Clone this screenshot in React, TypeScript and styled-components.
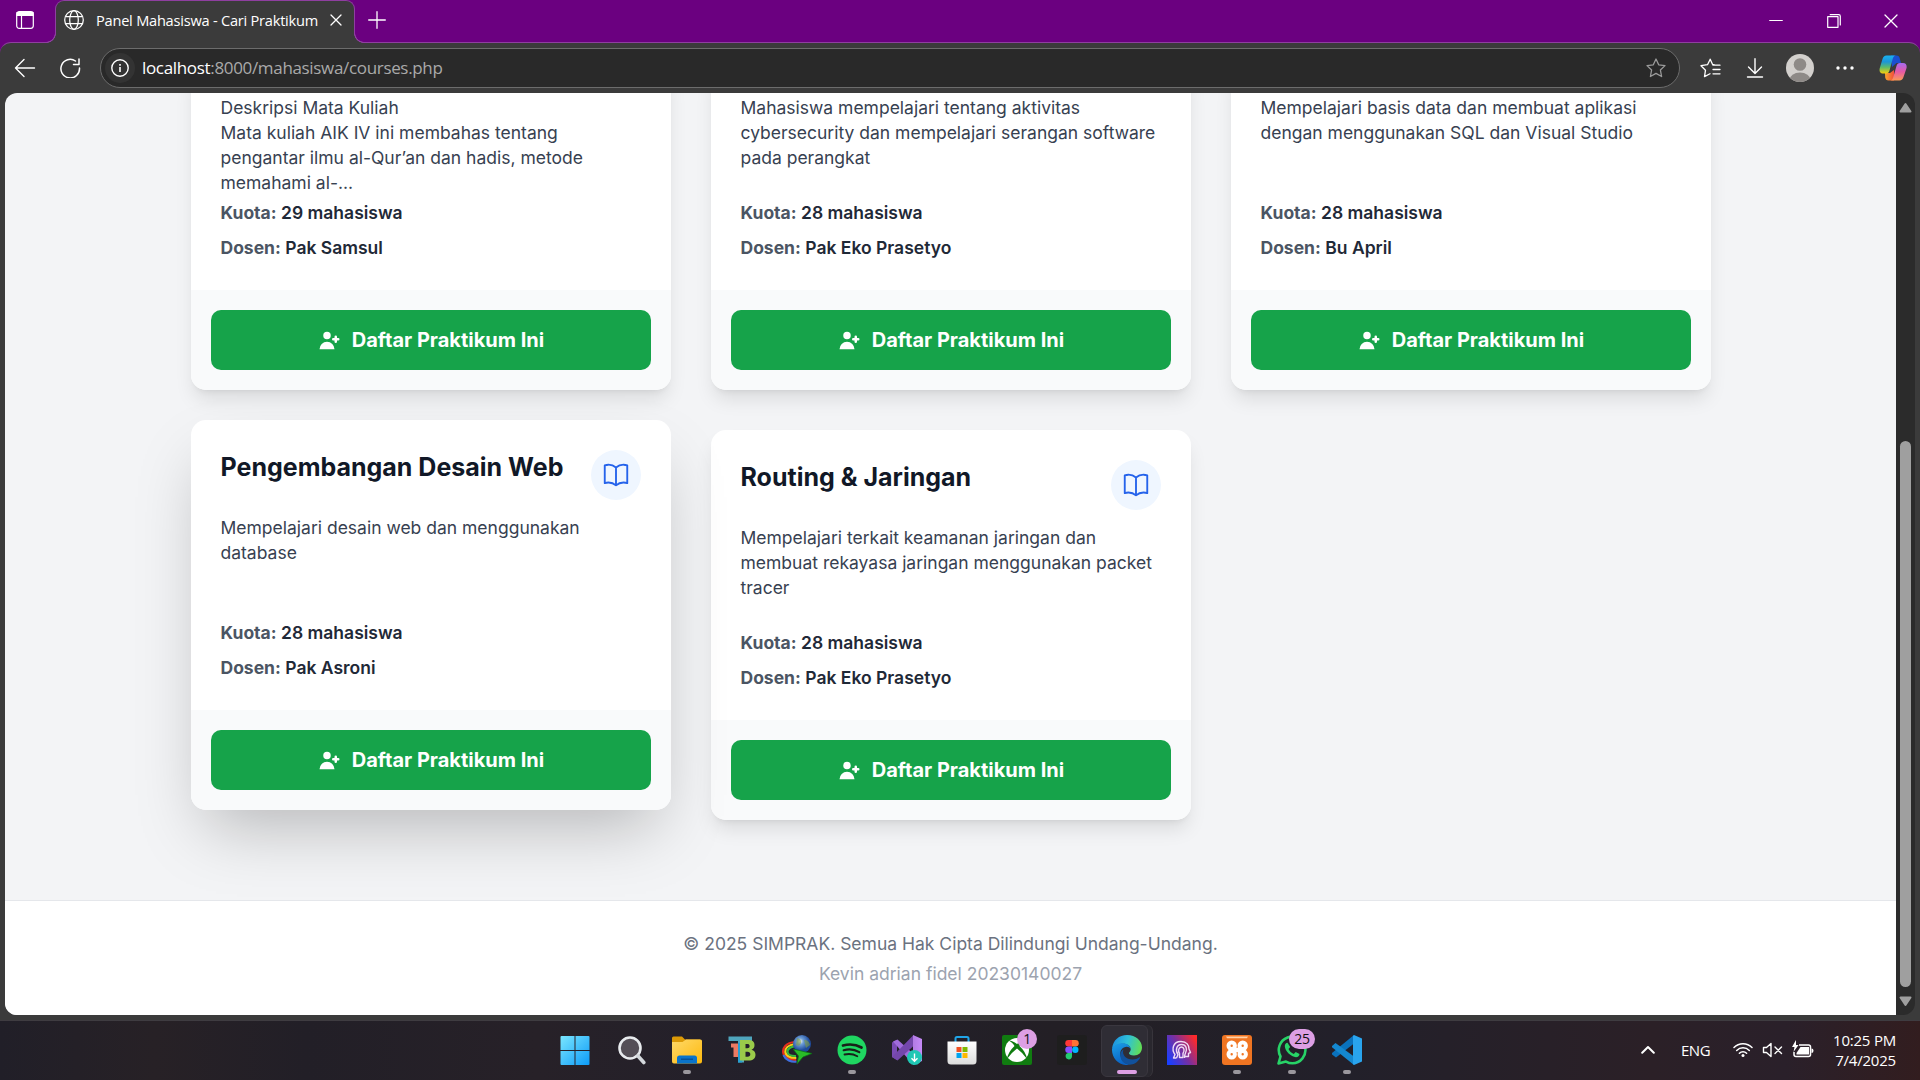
import React from 'react';
import styled, { createGlobalStyle, css } from 'styled-components';

const Global = createGlobalStyle`
  * { box-sizing: border-box; }
  html, body { margin: 0; padding: 0; overflow: hidden; background: #231f27; }
  p, h3 { margin: 0; }
  svg { display: block; flex: none; }
`;

const system = `'Open Sans', 'Noto Sans', sans-serif`;

const Screen = styled.div`
  width: 1920px;
  height: 1080px;
  display: flex;
  flex-direction: column;
  overflow: hidden;
  font-family: ${system};
  color: #fff;
`;

/* ---------- browser chrome ---------- */

const Browser = styled.div`
  height: 1020px;
  display: flex;
  flex-direction: column;
  background: #3b3b3b;
`;

const TitleBar = styled.div`
  height: 42px;
  flex: none;
  display: flex;
  background: #6b0080;
`;

const TabActions = styled.div`
  width: 55px;
  height: 40px;
  padding-right: 5px;
  display: flex;
  align-items: center;
  justify-content: center;
`;

const Tab = styled.div`
  position: relative;
  z-index: 1;
  width: 300px;
  height: 43px;
  padding: 0 12px 4px 8px;
  display: flex;
  align-items: center;
  background: #3b3b3b;
  border: 1px solid #8f3fa0;
  border-bottom: 0;
  border-radius: 9px 9px 0 0;
  &::before, &::after {
    content: '';
    position: absolute;
    bottom: 0;
    width: 10px;
    height: 10px;
  }
  &::before {
    left: -10px;
    background: radial-gradient(circle at 0 0, #6b0080 8.5px, #8f3fa0 9px 9.7px, #3b3b3b 10.2px);
  }
  &::after {
    right: -10px;
    background: radial-gradient(circle at 100% 0, #6b0080 8.5px, #8f3fa0 9px 9.7px, #3b3b3b 10.2px);
  }
`;

const TabTitle = styled.span`
  flex: 1;
  margin-left: 12px;
  padding-bottom: 1px;
  font-size: 14.6px;
  letter-spacing: -0.23px;
  white-space: nowrap;
`;

const NewTab = styled.div`
  height: 40px;
  padding-left: 13px;
  display: flex;
  align-items: center;
`;

const WindowButtons = styled.div`
  margin-left: auto;
  height: 42px;
  display: flex;
`;

const WindowButton = styled.div`
  width: 57.5px;
  display: flex;
  align-items: center;
  justify-content: center;
`;

const ToolbarBack = styled.div`
  flex: none;
  height: 51px;
  background: linear-gradient(#6b0080 12px, #3b3b3b 12px);
`;

const Toolbar = styled.div`
  height: 51px;
  padding: 5px 1px 5px 14px;
  display: flex;
  align-items: center;
  background: #3b3b3b;
  border-top: 1px solid #8f3fa0;
  border-radius: 11px 11px 0 0;
`;

const NavButtons = styled.div`
  width: 86px;
  display: flex;
  gap: 23px;
`;

const AddressBar = styled.div`
  width: 1580px;
  height: 40px;
  padding: 0 13px 0 4px;
  display: flex;
  align-items: center;
  background: #292929;
  border: 1px solid #6c6c6c;
  border-radius: 20px;
`;

const SiteInfo = styled.div`
  width: 30px;
  height: 30px;
  display: grid;
  place-items: center;
  border-radius: 50%;
  background: #333;
`;

const Url = styled.div`
  flex: 1;
  margin-left: 7px;
  padding-bottom: 2px;
  font-size: 17px;
  letter-spacing: -0.33px;
  color: #a9a9a9;
  b { font-weight: 400; color: #fff; }
`;

const ToolIcons = styled.div`
  padding-left: 7.5px;
  display: grid;
  grid-template-columns: repeat(4, 45px) 51px;
  place-items: center;
`;

/* ---------- page ---------- */

const Viewport = styled.div`
  height: 922px;
  margin: 0 5px;
  display: flex;
  border-radius: 12px;
  overflow: hidden;
  background: #2b2b2b;
`;

const Page = styled.div`
  width: 1891px;
  height: 922px;
  display: flex;
  flex-direction: column;
  justify-content: flex-end;
  overflow: hidden;
  background: #f3f4f6;
  font-family: Inter, sans-serif;
`;

const Courses = styled.div`
  width: 1520px;
  margin: 0 0 80px 185.5px;
  display: grid;
  grid-template-columns: repeat(3, 480px);
  gap: 40px;
  align-items: end;
`;

const Card = styled.article<{ $raised?: boolean }>`
  display: flex;
  flex-direction: column;
  border-radius: 15px;
  overflow: hidden;
  background: #fff;
  box-shadow: 0 12.5px 18.75px -3.75px rgba(0, 0, 0, 0.1), 0 5px 7.5px -5px rgba(0, 0, 0, 0.1);
  ${p => p.$raised && css`
    transform: translateY(-10px);
    box-shadow: 0 31.25px 62.5px -15px rgba(0, 0, 0, 0.25);
  `}
`;

const CardBody = styled.div`
  padding: 30px;
`;

const CardHead = styled.div`
  margin-bottom: 15px;
  display: flex;
  justify-content: space-between;
  align-items: flex-start;
`;

const CardTitle = styled.h3`
  font-size: 25px;
  line-height: 35px;
  font-weight: 700;
  color: #111827;
  white-space: nowrap;
`;

const BookBadge = styled.div`
  width: 50px;
  height: 50px;
  display: grid;
  place-items: center;
  border-radius: 50%;
  background: #eff6ff;
  color: #2563eb;
`;

const Description = styled.p`
  height: 100px;
  margin-bottom: 5px;
  font-size: 17.5px;
  line-height: 25px;
  color: #374151;
  white-space: pre-line;
`;

const Facts = styled.div`
  display: flex;
  flex-direction: column;
  gap: 10px;
`;

const Fact = styled.p`
  font-size: 17.5px;
  line-height: 25px;
  font-weight: 600;
  color: #1f2937;
  strong { font-weight: 700; color: #4b5563; }
`;

const CardFooter = styled.div`
  padding: 20px;
  background: #f9fafb;
`;

const Enroll = styled.button`
  width: 100%;
  height: 60px;
  padding: 0;
  display: flex;
  align-items: center;
  justify-content: center;
  gap: 10px;
  border: 0;
  border-radius: 10px;
  background: #16a34a;
  color: #fff;
  font: 700 20px/30px Inter, sans-serif;
`;

const PageFooter = styled.footer`
  height: 115px;
  padding: 30px 0 29px;
  display: flex;
  flex-direction: column;
  align-items: center;
  gap: 5px;
  border-top: 1px solid #e5e7eb;
  background: #fff;
`;

const FooterText = styled.p<{ $light?: boolean }>`
  font-size: 17.5px;
  line-height: 25px;
  color: ${p => (p.$light ? '#9ca3af' : '#6b7280')};
`;

const ScrollBar = styled.div`
  width: 19px;
  padding: 9px 0 8px;
  display: flex;
  flex-direction: column;
  align-items: center;
`;

const Thumb = styled.div`
  width: 11px;
  height: 546px;
  margin: auto 0 9px;
  border-radius: 6px;
  background: #9f9f9f;
`;

/* ---------- taskbar ---------- */

const TaskBar = styled.div`
  height: 60px;
  display: grid;
  grid-template-columns: 549px 825px 546px;
  background: linear-gradient(90deg, #211f28 0, #272126 8%, #221f27 16%, #272128 28%, #22202b 42%, #231f25 55%, #22202a 70%, #2b2027 86%, #2a202a 93%, #321d1f 100%);
  border-top: 1px solid #3f3c41;
`;

const Apps = styled.div`
  grid-column: 2;
  display: flex;
`;

const AppSlot = styled.div<{ $active?: boolean }>`
  position: relative;
  width: 55px;
  height: 58px;
  display: grid;
  place-items: center;
  &:first-child { padding-right: 3px; }
  ${p => p.$active && css`
    &::before {
      content: '';
      position: absolute;
      left: 2px;
      top: 4px;
      width: 45px;
      height: 50px;
      border-radius: 6px;
      border: 1px solid #3a373f;
      background: #2f2d35;
      box-shadow: 4px 0 0 0 #29272e, 5px 0 0 0 #37343b;
    }
    svg { position: relative; }
  `}
`;

const Indicator = styled.i<{ $active?: boolean }>`
  position: absolute;
  bottom: 5px;
  left: 50%;
  width: ${p => (p.$active ? 20 : 8)}px;
  height: 4px;
  transform: translateX(-50%);
  border-radius: 2px;
  background: ${p => (p.$active ? '#dd9fe4' : '#9a979d')};
`;

const Badge = styled.span<{ $wide?: boolean }>`
  position: absolute;
  top: 8px;
  left: ${p => (p.$wide ? 25 : 28)}px;
  width: ${p => (p.$wide ? 26 : 20)}px;
  height: 20px;
  border-radius: 10px;
  background: #dd9fe4;
  color: #111;
  font-size: 14px;
  line-height: 20px;
  text-align: center;
  letter-spacing: -0.3px;
`;

const Tray = styled.div`
  display: flex;
  align-items: center;
  justify-content: flex-end;
  padding: 0 24px 2px 0;
`;

const Language = styled.span`
  width: 30px;
  margin: 0 22px 0 26px;
  font-size: 15px;
  letter-spacing: -0.5px;
  white-space: nowrap;
`;

const Status = styled.div`
  display: flex;
  align-items: center;
  gap: 9px;
`;

const Clock = styled.div`
  width: 63px;
  margin-left: 19px;
  text-align: right;
  font-size: 15px;
  line-height: 20px;
  letter-spacing: -0.2px;
  white-space: nowrap;
`;

/* ---------- icons ---------- */

const UserPlus = () => (
  <svg width="25" height="25" viewBox="0 0 20 20" fill="currentColor">
    <path d="M8 9a3 3 0 100-6 3 3 0 000 6zM8 11a6 6 0 016 6H2a6 6 0 016-6zM16 7a1 1 0 10-2 0v1h-1a1 1 0 100 2h1v1a1 1 0 102 0v-1h1a1 1 0 100-2h-1V7z" />
  </svg>
);

const Book = () => (
  <svg width="30" height="30" viewBox="0 0 24 24" fill="none" stroke="currentColor" strokeWidth="1.5" strokeLinecap="round" strokeLinejoin="round">
    <path d="M12 6.042A8.967 8.967 0 006 3.75c-1.052 0-2.062.18-3 .512v14.25A8.987 8.987 0 016 18c2.305 0 4.408.867 6 2.292m0-14.25a8.966 8.966 0 016-2.292c1.052 0 2.062.18 3 .512v14.25A8.987 8.987 0 0018 18a8.967 8.967 0 00-6 2.292m0-14.25v14.25" />
  </svg>
);

const Line = ({ w = 20, h = 20, d, s = 1.3, c = '#fff' }: { w?: number; h?: number; d: string; s?: number; c?: string }) => (
  <svg width={w} height={h} viewBox={`0 0 ${w} ${h}`} fill="none" stroke={c} strokeWidth={s} strokeLinecap="round" strokeLinejoin="round">
    <path d={d} />
  </svg>
);

const TabsIcon = () => (
  <svg width="18" height="18" viewBox="0 0 18 18" fill="none" stroke="#fff" strokeWidth="1.2">
    <rect x=".7" y=".7" width="16.6" height="16.6" rx="2.5" />
    <path d="M1 1.500h16v3H1z" fill="#fff" />
    <path d="M5.500 5v12" />
  </svg>
);

const Globe = () => (
  <svg width="20" height="20" viewBox="0 0 20 20" fill="none" stroke="#fff" strokeWidth="1.25">
    <circle cx="10" cy="10" r="9.300" />
    <ellipse cx="10" cy="10" rx="4.300" ry="9.300" />
    <path d="M1.500 6.500h17M1.500 13.500h17" />
  </svg>
);

const Info = () => (
  <svg width="18" height="18" viewBox="0 0 18 18" fill="none" stroke="#fff" strokeWidth="1.4">
    <circle cx="9" cy="9" r="8.200" />
    <path d="M9 8v5M9 5v1.700" strokeWidth="1.600" />
  </svg>
);

const Favorites = () => (
  <Line w={21} h={20} s={1.3} d="M14.500 6.800L12.600 6.500 10.200 1.200 7.500 6.700 1 7.700 5.500 12.200 4.500 18.600 10 15.700M13 7.200h7M13 11.500h7M13 15.800h7" />
);

const Avatar = () => (
  <svg width="28" height="28" viewBox="0 0 28 28">
    <clipPath id="face"><circle cx="14" cy="14" r="14" /></clipPath>
    <g clipPath="url(#face)">
      <rect width="28" height="28" fill="#d3d0cd" />
      <circle cx="14" cy="10.500" r="6.300" fill="#8e8a87" />
      <ellipse cx="14" cy="26" rx="10.500" ry="7.500" fill="#8e8a87" />
    </g>
  </svg>
);

const Dots = () => (
  <svg width="18" height="4" viewBox="0 0 18 4" fill="#fff">
    <circle cx="2" cy="2" r="1.700" /><circle cx="9" cy="2" r="1.700" /><circle cx="16" cy="2" r="1.700" />
  </svg>
);

const Copilot = () => (
  <svg width="28" height="26" viewBox="0 0 28 26">
    <defs>
      <linearGradient id="cpA" x1="0" y1="0" x2="0" y2="1">
        <stop offset="0" stopColor="#19b2f0" /><stop offset=".35" stopColor="#1c95d8" /><stop offset=".65" stopColor="#5cbb6b" /><stop offset="1" stopColor="#f6cf0b" />
      </linearGradient>
      <linearGradient id="cpB" x1="0" y1="0" x2="0" y2="1">
        <stop offset="0" stopColor="#a56bf0" /><stop offset=".5" stopColor="#e659a5" /><stop offset="1" stopColor="#fc9a55" />
      </linearGradient>
      <linearGradient id="cpC" x1="0" y1="0" x2="1" y2="0">
        <stop offset="0" stopColor="#f9a52c" /><stop offset="1" stopColor="#f0503c" />
      </linearGradient>
    </defs>
    <path d="M12 .5h5.500c2 0 2.800 1.300 3.300 3l1.200 4.500h-4.500L13 12z" fill="#1a4fd0" />
    <path d="M6 18h5l4-3v10.500h-5.500c-2 0-2.800-1.300-3.300-3z" fill="url(#cpC)" />
    <path d="M7.500.5H17c-2 0-2.700 1.500-3.200 3L10.500 15.500c-.6 2-1.500 3-3.500 3H4C1 18.500 0 16 .8 13L3.500 4C4.200 1.700 5.300.500 7.500.500z" fill="url(#cpA)" />
    <path d="M20.500 25.500H11c2 0 2.700-1.500 3.200-3L17.500 11c.6-2 1.500-3 3.500-3h3c3.200 0 4.200 2.500 3.400 5.500L24.500 22c-.7 2.300-1.800 3.500-4 3.500z" fill="url(#cpB)" />
  </svg>
);

const Arrow = ({ down }: { down?: boolean }) => (
  <svg width="13" height="11" viewBox="0 0 13 11">
    <path d={down ? 'M1.500 1.500h10L6.500 9z' : 'M1.500 9.500h10L6.500 2z'} fill="#9f9f9f" stroke="#9f9f9f" strokeWidth="2" strokeLinejoin="round" />
  </svg>
);

const Icon = ({ children, size = 30 }: { children: React.ReactNode; size?: number }) => (
  <svg width={size} height={size} viewBox="0 0 30 30">{children}</svg>
);

const WindowsIcon = () => (
  <Icon>
    <linearGradient id="win" x1="0" y1="0" x2="1" y2="1"><stop stopColor="#7ae6ff" /><stop offset="1" stopColor="#0d9bf7" /></linearGradient>
    <path fill="url(#win)" d="M.5 2q0-1 1-1H14.500v14H.5zM15.500 1H28.500q1 0 1 1V15H15.500zM.5 16H14.500V30H1.500q-1 0-1-1zM15.500 16H29.500v13q0 1-1 1H15.500z" />
  </Icon>
);

const SearchIcon = () => (
  <Icon>
    <circle cx="13" cy="13" r="10.500" fill="#544f57" stroke="#e8ebee" strokeWidth="2.600" />
    <path d="M21 21l5.800 6.500" stroke="#d3d8dc" strokeWidth="3.600" strokeLinecap="round" />
  </Icon>
);

const FolderIcon = () => (
  <Icon>
    <defs><linearGradient id="fd" x1="0" y1="0" x2="1" y2="1"><stop stopColor="#ffd968" /><stop offset="1" stopColor="#fdb90e" /></linearGradient></defs>
    <path d="M0 3q0-1.500 1.500-1.500H10L13 4.500H28V12H0z" fill="#dc9a06" />
    <path d="M0 7H10.500L14 4.500H28.500Q30 4.500 30 6V26.500Q30 28.500 28 28.500H2Q0 28.500 0 26.500z" fill="url(#fd)" />
    <path d="M5 28.500V23q0-2.500 2.500-2.500h15Q25 20.500 25 23v5.500z" fill="#0a74cb" />
    <path d="M9 24.200h12" stroke="#054a8c" strokeWidth="1.200" />
  </Icon>
);

const TBIcon = () => (
  <Icon>
    <path d="M1.500 1.500H25V6H17v21.500h-6V6H1.500z" fill="#4fa5bd" />
    <path d="M4 8.500h7V22H6.500v-9.500H4z" fill="#ec7a63" />
    <path d="M11 8h4v19.500h-4z" fill="#26a0d2" />
    <path fillRule="evenodd" d="M13 5h8.500c4.500 0 6 2.200 6 5 0 2.500-1 4-3 4.700 2.700.6 4 2.500 4 5 0 3.600-2.500 5.800-7 5.800H13zM18.500 9v4.300h1.700c1.700 0 2.400-.8 2.400-2.200 0-1.500-.8-2.100-2.400-2.100zm0 7.800v4.900h2c2 0 2.800-1 2.800-2.500s-.9-2.400-2.800-2.400z" fill="#9acb4a" />
  </Icon>
);

const IDMIcon = () => (
  <Icon>
    <defs><radialGradient id="gl" cx=".4" cy=".35"><stop stopColor="#fffef0" /><stop offset=".35" stopColor="#6f9fd8" /><stop offset="1" stopColor="#1e4b9c" /></radialGradient></defs>
    <g fill="none" strokeWidth="2.200">
      <path d="M13 7C4 7.500.5 13 1.200 17.500c.6 4 5 7.500 13 7.500" stroke="#e62e1d" />
      <path d="M13 9C6 10 3 13.500 3.300 17c.5 4 5 6 11 6" stroke="#f8cd1b" />
      <path d="M13 11.200C8 12 5.500 14 5.500 16.700c.2 3 4 4.500 8.500 4.300" stroke="#36b83e" />
      <path d="M1.500 20c2 5 8 7.500 13 6.500" stroke="#3f6fe0" />
    </g>
    <circle cx="20" cy="9" r="9" fill="url(#gl)" />
    <path d="M15 3q5 1 4 5t-5 2zM22 5q5 0 6 5l-4 3z" fill="#7f9c45" opacity=".6" />
    <path d="M11 14l19 4.500-9 3.500-6 7 1.500-8z" fill="#29bb27" stroke="#0c6e16" strokeWidth=".7" />
  </Icon>
);

const SpotifyIcon = () => (
  <Icon>
    <circle cx="15" cy="15" r="14.500" fill="#1fd661" />
    <g fill="none" stroke="#182019" strokeLinecap="round">
      <path d="M6 10.500c6-1.600 13-1.100 18.500 2" strokeWidth="2.700" />
      <path d="M6.700 15.200c5.300-1.400 11-.8 15.600 1.900" strokeWidth="2.200" />
      <path d="M7.500 19.500c4.500-1 9-.5 12.800 1.700" strokeWidth="1.800" />
    </g>
  </Icon>
);

const VSIcon = () => (
  <Icon>
    <defs><linearGradient id="vs" x1="0" y1="0" x2="1" y2="0"><stop stopColor="#b27be4" /><stop offset="1" stopColor="#c68af8" /></linearGradient></defs>
    <path d="M0 7.500L5 5v20l-5-3z" fill="#7a4bb5" />
    <path d="M1 6.500L5.500 4.500 21.500 19v11z" fill="#a06bdc" />
    <path d="M0 22l5.500 3.500L21.500 11V0z" fill="#7447ac" />
    <path d="M21 0l9 4v22l-9 4z" fill="url(#vs)" />
    <circle cx="22.500" cy="22.500" r="7.500" fill="#1fc7b4" />
    <path d="M22.500 18.500v7.500m-3-2.800l3 3 3-3" fill="none" stroke="#fff" strokeWidth="1.400" />
  </Icon>
);

const StoreIcon = () => (
  <Icon>
    <defs><linearGradient id="st" x1="0" y1="0" x2="0" y2="1"><stop stopColor="#fff" /><stop offset="1" stopColor="#dcdcdc" /></linearGradient></defs>
    <path d="M8.500 7V3.500Q8.500 2 10 2h10q1.500 0 1.500 1.500V7" fill="none" stroke="#20a5e8" strokeWidth="2" />
    <path d="M.5 6.500h29V26q0 3.500-3.500 3.500H4Q.5 29.500.5 26z" fill="url(#st)" />
    <path d="M9.500 12h5v5h-5z" fill="#f25022" /><path d="M15.500 12h5v5h-5z" fill="#7fba00" />
    <path d="M9.500 18h5v5h-5z" fill="#00a4ef" /><path d="M15.500 18h5v5h-5z" fill="#ffb900" />
  </Icon>
);

const XboxIcon = () => (
  <Icon>
    <rect width="30" height="30" rx="2" fill="#107c10" />
    <circle cx="15" cy="15" r="12" fill="#fff" />
    <path d="M6 5.500Q10 5 15 9q5-4 9-3.500Q20 6 17.500 11q6.500 6 7.500 13-4-6-10-10.500Q9 18 5 24q1-7 7.500-13Q10 6.500 6 5.500z" fill="#107c10" />
  </Icon>
);

const FigmaIcon = () => (
  <Icon>
    <rect width="30" height="30" rx="3" fill="#1e1e1e" />
    <path d="M15 5h-3.500a3.200 3.200 0 000 6.500H15z" fill="#ff3737" />
    <path d="M15 5h3.500a3.200 3.200 0 010 6.500H15z" fill="#ff7237" />
    <path d="M15 11.500h-3.500a3.200 3.200 0 000 6.500H15z" fill="#874fff" />
    <circle cx="18.300" cy="14.700" r="3.200" fill="#00b6ff" />
    <path d="M15 18h-3.500a3.200 3.200 0 103.500 3.300z" fill="#24cb71" />
  </Icon>
);

const EdgeIcon = () => (
  <Icon>
    <defs>
      <linearGradient id="eA" x1="0" y1=".3" x2="1" y2=".5"><stop stopColor="#1c8fe0" /><stop offset=".5" stopColor="#2fc1d8" /><stop offset="1" stopColor="#62de55" /></linearGradient>
      <linearGradient id="eB" x1="0" y1="0" x2=".4" y2="1"><stop stopColor="#1ba0e8" /><stop offset="1" stopColor="#0a62c4" /></linearGradient>
    </defs>
    <path d="M0 14C1 5 7 0 15 0c9 0 15 6 15 12.500 0 5-3.500 8-8 8-3.500 0-5-1.300-5-2.300s1.700-1.700 1.700-4c0-3-3-5.500-7.500-5.500C6 8.700 1.500 11 0 14z" fill="url(#eA)" />
    <path d="M0 14C1.500 10 6 7.700 11 8.200c4 .3 7.500 2.500 7.700 6-.7-1.700-2.200-2.500-4-2.500C10 12 7.500 16 8.500 20.500c1 5 4.500 8.500 9 9.300C8 31.500 0 24 0 15z" fill="url(#eB)" />
    <path d="M11.500 14.500c-2 5 2.500 10 9 10 3 0 5-1 6.500-2 .8-.4 1.300.2.900.8-2 3.700-6 6.500-10.400 6.500C11 29 8 24.500 8.300 19.500c.2-2.300 1.500-4.200 3.200-5z" fill="#11519c" />
  </Icon>
);

const HeadIcon = () => (
  <Icon>
    <defs><linearGradient id="hd" x1="0" y1=".8" x2="1" y2=".2"><stop stopColor="#1a3fff" /><stop offset=".5" stopColor="#7a2f9e" /><stop offset="1" stopColor="#ff2a2a" /></linearGradient></defs>
    <rect width="30" height="30" fill="url(#hd)" />
    <g fill="none" stroke="#f0dcf5" strokeWidth="1.400" strokeLinejoin="round">
      <path d="M9.500 23h-3l1.500-3.500C4.500 15 5.500 6.500 14 6.500c6 0 8 4 8 7.500l1.500 3.500-2 .8v3.200h-4" />
      <path d="M9.500 23l1.500-3.500c-3-4-1.500-10 3.500-10s6 5 4 8.500c-.8 1.500-1 3-1 5" />
      <path d="M12.500 22.500v-4c-2-3-.5-6.500 2-6.500s3.500 3.500 1.500 6.500v4z" />
    </g>
  </Icon>
);

const XamppIcon = () => (
  <Icon>
    <rect width="30" height="30" rx="3" fill="#f07522" />
    <path d="M4 1.500h22l-1 1.700H5z" fill="#ffd2a8" />
    <g fill="none" stroke="#fff" strokeWidth="4">
      <circle cx="9.700" cy="10.700" r="3.200" /><circle cx="20.700" cy="10.700" r="3.200" />
      <circle cx="9.700" cy="19.300" r="3.200" /><circle cx="20.700" cy="19.300" r="3.200" />
      <path d="M10 15h10.500" strokeWidth="4.500" />
    </g>
  </Icon>
);

const WhatsAppIcon = () => (
  <Icon>
    <path d="M1.500 28.500l2-7A13.300 13.300 0 1115.500 28.300a13.300 13.300 0 01-6.500-1.700z" fill="none" stroke="#27d367" strokeWidth="2.600" strokeLinejoin="round" />
    <path d="M10.500 7.800c-1.500 0-2.700 1.500-2.700 3.500C8 16 14 22 19 22.200c2 0 3.500-1.300 3.500-3.200l-3.800-2-1.900 2c-2.500-1-4.300-3-5.300-5l1.700-1.900z" fill="#27d367" />
  </Icon>
);

const CodeIcon = () => (
  <Icon>
    <path d="M22 0v8.500L4 22.500 0 19.500v-1.500z" fill="#0a72bd" />
    <path d="M0 11l3.500-3L22 21.500V30L0 12.200z" fill="#1488d0" />
    <path d="M22 0l8 3.500v23L22 30l-1-1V1z" fill="#29a4ee" />
  </Icon>
);

const Wifi = () => (
  <svg width="20" height="17" viewBox="0 0 20 17" fill="none" stroke="#fff" strokeWidth="1.500" strokeLinecap="round">
    <path d="M1 6.500a12.500 12.500 0 0118 0M3.700 9.500a8.700 8.700 0 0112.600 0M6.400 12.200a5 5 0 017.200 0" />
    <circle cx="10" cy="14.500" r="1.500" fill="#fff" stroke="none" />
  </svg>
);

const Battery = () => (
  <svg width="22" height="19" viewBox="0 0 22 19">
    <path d="M7 5h9.500q2 0 2 2v7.500q0 2-2 2H4q-2 0-2-2V12" fill="none" stroke="#fff" strokeWidth="1.500" />
    <path d="M8.500 7H17v7.500H4.500V13z" fill="#fff" /><path d="M19.500 8.500q2 0 2 2.200t-2 2.200z" fill="#fff" />
    <path d="M4 0L0 7h2.500L1.500 12 6.500 5H4z" fill="#fff" />
  </svg>
);

/* ---------- data ---------- */

type Course = { title?: string; text: string; quota: number; lecturer: string; raised?: boolean };

const courses: Course[] = [
  { text: 'Deskripsi Mata Kuliah\nMata kuliah AIK IV ini membahas tentang\npengantar ilmu al-Qur’an dan hadis, metode\nmemahami al-...', quota: 29, lecturer: 'Pak Samsul' },
  { text: 'Mahasiswa mempelajari tentang aktivitas\ncybersecurity dan mempelajari serangan software\npada perangkat', quota: 28, lecturer: 'Pak Eko Prasetyo' },
  { text: 'Mempelajari basis data dan membuat aplikasi\ndengan menggunakan SQL dan Visual Studio', quota: 28, lecturer: 'Bu April' },
  { title: 'Pengembangan Desain Web', text: 'Mempelajari desain web dan menggunakan\ndatabase', quota: 28, lecturer: 'Pak Asroni', raised: true },
  { title: 'Routing & Jaringan', text: 'Mempelajari terkait keamanan jaringan dan\nmembuat rekayasa jaringan menggunakan packet\ntracer', quota: 28, lecturer: 'Pak Eko Prasetyo' },
];

const apps: { icon: React.ReactNode; open?: boolean; active?: boolean; badge?: number }[] = [
  { icon: <WindowsIcon /> },
  { icon: <SearchIcon /> },
  { icon: <FolderIcon />, open: true },
  { icon: <TBIcon /> },
  { icon: <IDMIcon /> },
  { icon: <SpotifyIcon />, open: true },
  { icon: <VSIcon /> },
  { icon: <StoreIcon /> },
  { icon: <XboxIcon />, badge: 1 },
  { icon: <FigmaIcon /> },
  { icon: <EdgeIcon />, open: true, active: true },
  { icon: <HeadIcon /> },
  { icon: <XamppIcon />, open: true },
  { icon: <WhatsAppIcon />, open: true, badge: 25 },
  { icon: <CodeIcon />, open: true },
];

export default function App() {
  return (
    <Screen>
      <Global />
      <Browser>
        <TitleBar>
          <TabActions><TabsIcon /></TabActions>
          <Tab>
            <Globe />
            <TabTitle>Panel Mahasiswa - Cari Praktikum</TabTitle>
            <Line w={12} h={12} d="M1 1l10 10M11 1L1 11" />
          </Tab>
          <NewTab><Line w={18} h={18} d="M9 .7v16.600M.7 9h16.600" /></NewTab>
          <WindowButtons>
            <WindowButton><Line w={14} h={14} s={1.2} d="M.7 6.500h12.600" /></WindowButton>
            <WindowButton><Line w={14} h={14} s={1.2} d="M.7 2.700h10.300v10.600H.7zM3.200.700h8.500q1.600 0 1.600 1.600v8.700" /></WindowButton>
            <WindowButton><Line w={14} h={14} d="M1 1l12 12M13 1L1 13" /></WindowButton>
          </WindowButtons>
        </TitleBar>
        <ToolbarBack>
          <Toolbar>
            <NavButtons>
              <Line w={22} h={20} s={1.4} d="M20.500 10H1.500M10 1.500L1.500 10l8.500 8.500" />
              <Line w={22} h={20} s={1.5} d="M20.500 10A9.300 9.300 0 1116.500 3M20 1v5.500h-5.500" />
            </NavButtons>
            <AddressBar>
              <SiteInfo><Info /></SiteInfo>
              <Url><b>localhost</b>:8000/mahasiswa/courses.php</Url>
              <Line w={20} h={20} c="#9a9a9a" d="M10 1l2.700 5.800 6.300.8-4.600 4.400 1.200 6.500L10 15.400 4.400 18.500l1.200-6.500L1 7.600l6.300-.8z" />
            </AddressBar>
            <ToolIcons>
              <Favorites />
              <Line w={18} h={20} s={1.4} d="M9 .7v14.300M2.500 9L9 15.500 15.500 9M1.500 19h15" />
              <Avatar />
              <Dots />
              <Copilot />
            </ToolIcons>
          </Toolbar>
        </ToolbarBack>
        <Viewport>
          <Page>
            <Courses>
              {courses.map((c, i) => (
                <Card key={i} $raised={c.raised}>
                  <CardBody>
                    {c.title && (
                      <CardHead>
                        <CardTitle>{c.title}</CardTitle>
                        <BookBadge><Book /></BookBadge>
                      </CardHead>
                    )}
                    <Description>{c.text}</Description>
                    <Facts>
                      <Fact><strong>Kuota:</strong> {c.quota} mahasiswa</Fact>
                      <Fact><strong>Dosen:</strong> {c.lecturer}</Fact>
                    </Facts>
                  </CardBody>
                  <CardFooter>
                    <Enroll><UserPlus />Daftar Praktikum Ini</Enroll>
                  </CardFooter>
                </Card>
              ))}
            </Courses>
            <PageFooter>
              <FooterText>© 2025 SIMPRAK. Semua Hak Cipta Dilindungi Undang-Undang.</FooterText>
              <FooterText $light>Kevin adrian fidel 20230140027</FooterText>
            </PageFooter>
          </Page>
          <ScrollBar>
            <Arrow />
            <Thumb />
            <Arrow down />
          </ScrollBar>
        </Viewport>
      </Browser>
      <TaskBar>
        <Apps>
          {apps.map((a, i) => (
            <AppSlot key={i} $active={a.active}>
              {a.icon}
              {a.badge && <Badge $wide={a.badge > 9}>{a.badge}</Badge>}
              {a.open && <Indicator $active={a.active} />}
            </AppSlot>
          ))}
        </Apps>
        <Tray>
          <Line w={14} h={9} s={2} d="M1.200 7.700L7 2l5.800 5.700" />
          <Language>ENG</Language>
          <Status>
            <Wifi />
            <Line w={21} h={16} s={1.4} d="M1.500 5.500h3L9 1.500v13L4.500 10.500h-3zM13 5l6.500 6.500M19.500 5L13 11.500" />
            <Battery />
          </Status>
          <Clock>10:25 PM<br />7/4/2025</Clock>
        </Tray>
      </TaskBar>
    </Screen>
  );
}
